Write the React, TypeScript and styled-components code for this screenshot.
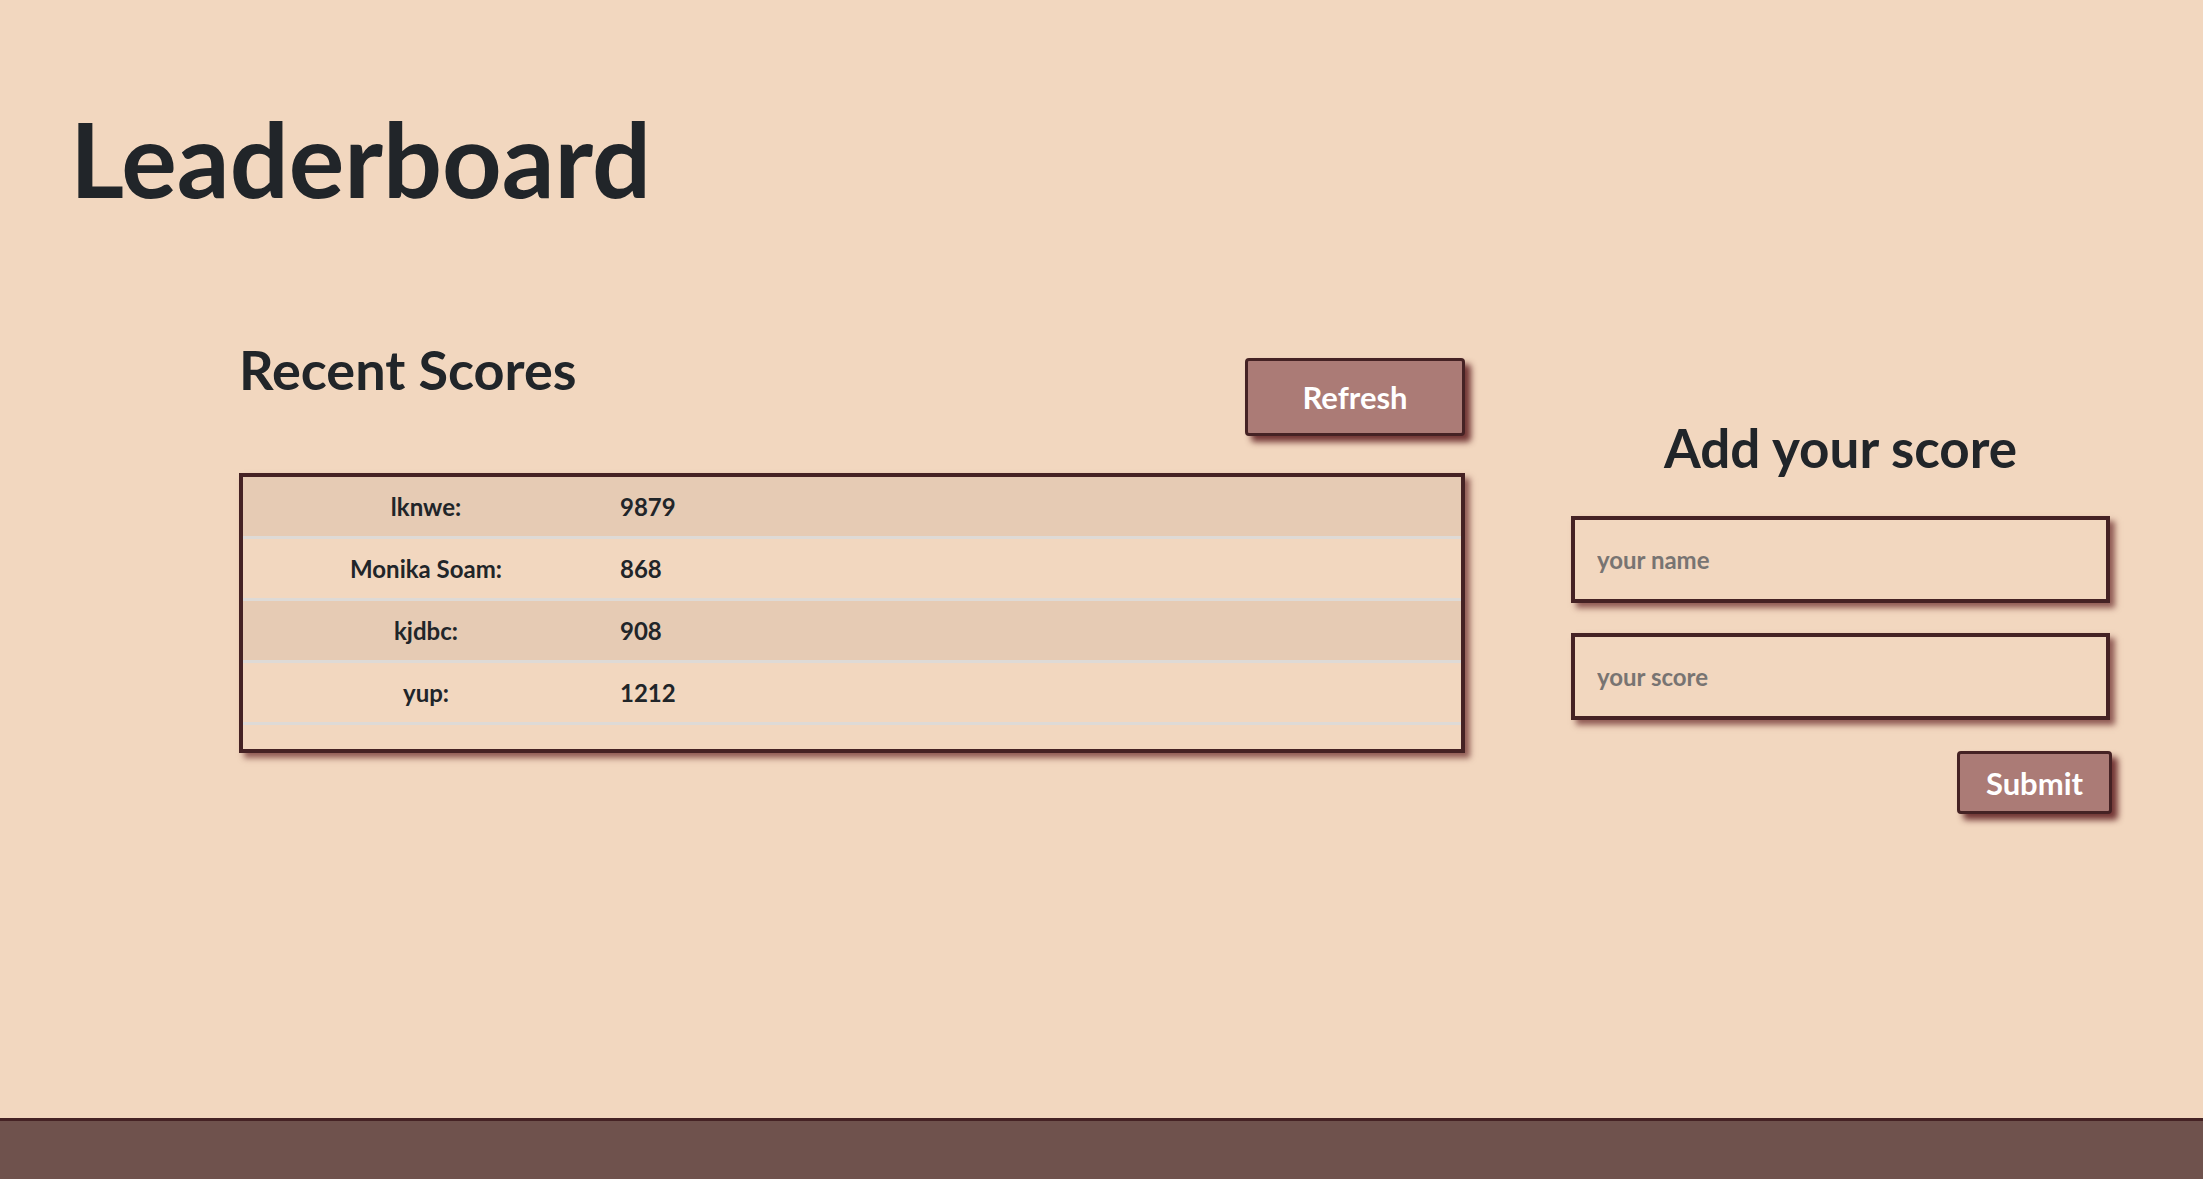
import React from "react";
import styled, { createGlobalStyle } from "styled-components";

const GlobalStyle = createGlobalStyle`
  html, body { margin: 0; padding: 0; }
  body {
    background: #f2d7bf;
    color: #212529;
    font-family: "Comic Sans MS", "Lato", "DejaVu Sans", sans-serif;
  }
  * { box-sizing: border-box; }
`;

const Page = styled.div`
  min-height: 100vh;
  display: flex;
  flex-direction: column;
`;

const Title = styled.h1`
  margin: 0;
  padding: 96px 0 0 70px;
  font-size: 104px;
  font-weight: 700;
  line-height: 1.2;
`;

const Main = styled.main`
  display: flex;
  align-items: flex-start;
  gap: 106px;
  padding: 117px 0 0 239px;
`;

const LeftCol = styled.section`
  width: 1226px;
  display: flex;
  flex-direction: column;
`;

const LeftHead = styled.div`
  display: flex;
  justify-content: space-between;
  align-items: flex-start;
  height: 135px;
`;

const SubTitle = styled.h2`
  margin: 0;
  font-size: 54px;
  font-weight: 700;
  line-height: 1.2;
`;

const ActionButton = styled.button<{ $w: number; $h: number }>`
  width: ${(p) => p.$w}px;
  height: ${(p) => p.$h}px;
  background: #ab7b76;
  color: #ffffff;
  border: 3px solid #452224;
  border-radius: 4px;
  box-shadow: 6px 6px 6px rgba(90, 25, 28, 0.85);
  font-family: inherit;
  font-weight: 700;
  font-size: 31px;
  cursor: pointer;
  padding: 0;
`;

const RefreshButton = styled(ActionButton)`
  margin-top: 20px;
`;

const Table = styled.div`
  border: 4px solid #452224;
  box-shadow: 5px 5px 6px rgba(90, 25, 28, 0.65);
  padding-bottom: 24px;
`;

const Row = styled.div<{ $odd: boolean }>`
  display: grid;
  grid-template-columns: 366px 1fr;
  align-items: center;
  height: 62px;
  background: ${(p) => (p.$odd ? "#e6cbb4" : "#f2d7bf")};
  border-bottom: 3px solid #dedad6;
  font-size: 24px;
  font-weight: 700;
`;

const NameCell = styled.div`
  text-align: center;
`;

const ScoreCell = styled.div`
  padding-left: 11px;
`;

const RightCol = styled.section`
  width: 539px;
  display: flex;
  flex-direction: column;
  padding-top: 78px;
`;

const FormTitle = styled.h2`
  margin: 0 0 37px;
  text-align: center;
  font-size: 53px;
  font-weight: 700;
  line-height: 1.2;
`;

const Input = styled.input`
  width: 100%;
  height: 87px;
  margin-bottom: 30px;
  background: transparent;
  border: 4px solid #452224;
  box-shadow: 5px 5px 6px rgba(90, 25, 28, 0.65);
  padding: 0 22px;
  font-family: inherit;
  font-size: 24px;
  font-weight: 700;
  color: #212529;
  outline: none;
  &::placeholder {
    color: #787472;
  }
`;

const SubmitRow = styled.div`
  display: flex;
  justify-content: flex-end;
  margin-top: 1px;
  margin-right: -2px;
`;

const Footer = styled.footer`
  margin-top: auto;
  height: 61px;
  background: #6f524d;
  border-top: 3px solid #452224;
`;

const scores = [
  { name: "lknwe", score: 9879 },
  { name: "Monika Soam", score: 868 },
  { name: "kjdbc", score: 908 },
  { name: "yup", score: 1212 },
];

export default function App() {
  return (
    <Page>
      <GlobalStyle />
      <Title>Leaderboard</Title>
      <Main>
        <LeftCol>
          <LeftHead>
            <SubTitle>Recent Scores</SubTitle>
            <RefreshButton $w={220} $h={78}>Refresh</RefreshButton>
          </LeftHead>
          <Table>
            {scores.map((s, i) => (
              <Row key={s.name} $odd={i % 2 === 0}>
                <NameCell>{s.name}:</NameCell>
                <ScoreCell>{s.score}</ScoreCell>
              </Row>
            ))}
          </Table>
        </LeftCol>
        <RightCol>
          <FormTitle>Add your score</FormTitle>
          <Input placeholder="your name" />
          <Input placeholder="your score" />
          <SubmitRow>
            <ActionButton $w={155} $h={63}>Submit</ActionButton>
          </SubmitRow>
        </RightCol>
      </Main>
      <Footer />
    </Page>
  );
}
